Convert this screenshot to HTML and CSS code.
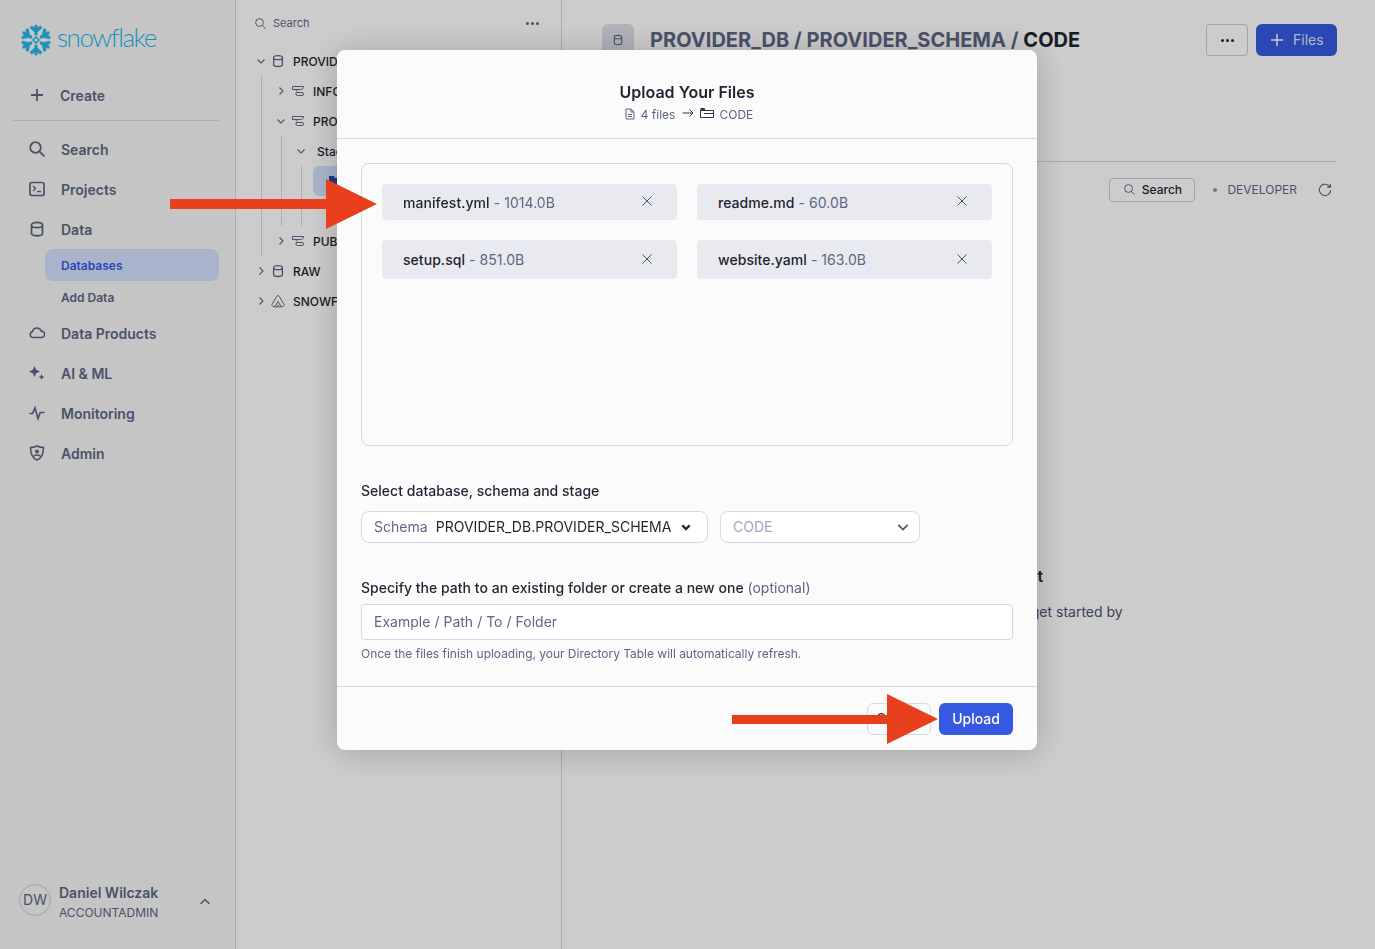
FILE: index.html
```html
<!DOCTYPE html>
<html lang="en">
<head>
    <meta charset="UTF-8">
    <meta name="viewport" content="width=device-width, initial-scale=1.0">
    <title>Upload Your Files</title>
    <link rel="stylesheet" href="styles.css">
</head>
<body>
    <svg class="defs" width="0" height="0">
        <symbol id="chev-right" viewBox="0 0 12 12"><path d="M4.500 2.500 8 6l-3.500 3.500" fill="none" stroke="currentColor" stroke-width="1.100"/></symbol>
        <symbol id="chev-down" viewBox="0 0 12 12"><path d="M2.500 4.500 6 8l3.500-3.500" fill="none" stroke="currentColor" stroke-width="1.100"/></symbol>
        <symbol id="chev-select" viewBox="0 0 12 12"><path d="M2 4.200 6 8.200l4-4" fill="none" stroke="currentColor" stroke-width="1.500"/></symbol>
        <symbol id="chev-small" viewBox="0 0 12 12"><path d="M2.800 4.500 6 7.700l3.200-3.200" fill="none" stroke="currentColor" stroke-width="2"/></symbol>
        <symbol id="db" viewBox="0 0 16 16"><path d="M3 4c0-3 10-3 10 0v8c0 3-10 3-10 0zM3 4.500c0 2.500 10 2.500 10 0" fill="none" stroke="currentColor" stroke-width="1.500"/></symbol>
        <symbol id="db-nav" viewBox="0 0 16 16"><path d="M2.500 4c0-3.500 11-3.500 11 0v8.500c0 3-11 3-11 0zM2.500 4.500c0 2.800 11 2.800 11 0" fill="none" stroke="currentColor" stroke-width="1.800"/></symbol>
        <symbol id="schema" viewBox="0 0 14 14"><path d="M1.500 2.500h11c0 2-1 3-3 3h-8zM5 5.500c0 1 .5 1.500 1.500 1.500M5 8.500h6a1.500 1.500 0 0 1 0 3H6.500A1.500 1.500 0 0 1 5 10z" fill="none" stroke="currentColor" stroke-width="1"/></symbol>
        <symbol id="search" viewBox="0 0 16 16"><circle cx="6.800" cy="6.800" r="4.800" fill="none" stroke="currentColor" stroke-width="1.200"/><path d="m10.400 10.400 4 4" stroke="currentColor" stroke-width="1.200"/></symbol>
        <symbol id="search-nav" viewBox="0 0 16 16"><circle cx="6.500" cy="6.500" r="5.300" fill="none" stroke="currentColor" stroke-width="1.800"/><path d="m10.400 10.400 5 5" stroke="currentColor" stroke-width="1.800"/></symbol>
        <symbol id="close" viewBox="0 0 12 12"><path d="m1.500 1.500 9 9m0-9-9 9" stroke="currentColor" stroke-width="1"/></symbol>
    </svg>

    <div class="app">
        <aside class="sidebar">
            <div class="logo">
                <svg class="logo-mark" viewBox="-16 -16 32 32">
                    <g fill="none" stroke="#29b5e8" stroke-width="3.200" stroke-linecap="round" stroke-linejoin="round">
                        <g id="arm"><path d="M0-6V-14M-4.200-12.500 0-8.300 4.200-12.500"/></g>
                        <use href="#arm" transform="rotate(60)"/>
                        <use href="#arm" transform="rotate(120)"/>
                        <use href="#arm" transform="rotate(180)"/>
                        <use href="#arm" transform="rotate(240)"/>
                        <use href="#arm" transform="rotate(300)"/>
                    </g>
                    <path d="M0-3 3 0 0 3-3 0z" fill="none" stroke="#29b5e8" stroke-width="1.600"/>
                </svg>
                <span class="logo-text">snowflake</span>
            </div>
            <div class="nav-item create">
                <svg class="nav-icon" viewBox="0 0 16 16"><path d="M8 2v12M2 8h12" stroke="currentColor" stroke-width="1.800"/></svg>
                <span>Create</span>
            </div>
            <hr class="nav-rule">
            <div class="nav-item"><svg class="nav-icon"><use href="#search-nav"/></svg><span>Search</span></div>
            <div class="nav-item">
                <svg class="nav-icon" viewBox="0 0 16 16"><rect x="1" y="1.500" width="14" height="13" rx="2" fill="none" stroke="currentColor" stroke-width="1.700"/><path d="m4 5 2.500 2.500L4 10M8 10.500h4" fill="none" stroke="currentColor" stroke-width="1.400"/></svg>
                <span>Projects</span>
            </div>
            <div class="nav-item"><svg class="nav-icon"><use href="#db-nav"/></svg><span>Data</span></div>
            <div class="subnav">
                <div class="sub-item active">Databases</div>
                <div class="sub-item">Add Data</div>
            </div>
            <div class="nav-item">
                <svg class="nav-icon" viewBox="0 0 16 16"><path d="M4 12.500a3 3 0 0 1-.500-5.900 4.600 4.600 0 0 1 8.800-.500 3.200 3.200 0 0 1 .200 6.400z" fill="none" stroke="currentColor" stroke-width="1.600"/></svg>
                <span>Data Products</span>
            </div>
            <div class="nav-item">
                <svg class="nav-icon" viewBox="0 0 16 16"><path d="M5.500 1 7.200 4.800 11 6.500 7.200 8.200 5.500 12 3.800 8.200 0 6.500 3.800 4.800zM12.500 9l.9 2.100 2.100.9-2.100.9-.9 2.100-.9-2.100-2.100-.9 2.100-.9z" fill="currentColor"/></svg>
                <span>AI &amp; ML</span>
            </div>
            <div class="nav-item">
                <svg class="nav-icon" viewBox="0 0 16 16"><path d="M.5 8.500h3L6 3l3 10.500 2.200-6H15.500" fill="none" stroke="currentColor" stroke-width="1.700"/></svg>
                <span>Monitoring</span>
            </div>
            <div class="nav-item">
                <svg class="nav-icon" viewBox="0 0 16 16"><path d="M8 1c2 1 4.500 1.500 6.500 1.500 0 6-1 10.500-6.500 12.500C2.500 13 1.500 8.500 1.500 2.500 3.500 2.500 6 2 8 1z" fill="none" stroke="currentColor" stroke-width="1.600"/><circle cx="8" cy="6.500" r="1.900" fill="currentColor"/><path d="M4.500 11.500c1-2 6-2 7 0" fill="none" stroke="currentColor" stroke-width="1.300"/></svg>
                <span>Admin</span>
            </div>
            <div class="user">
                <div class="avatar">DW</div>
                <div class="user-info">
                    <div class="user-name">Daniel Wilczak</div>
                    <div class="user-role">ACCOUNTADMIN</div>
                </div>
                <svg class="user-chev" viewBox="0 0 12 12"><path d="M1.500 8 6 3.500 10.500 8" fill="none" stroke="currentColor" stroke-width="1.500"/></svg>
            </div>
        </aside>

        <section class="tree-panel">
            <div class="tree-search">
                <svg class="tree-search-icon"><use href="#search"/></svg>
                <span>Search</span>
                <span class="dots tree-dots"><i></i><i></i><i></i></span>
            </div>
            <div class="tree">
                <div class="tree-row"><svg class="chev"><use href="#chev-down"/></svg><svg class="tree-icon"><use href="#db"/></svg><span>PROVIDER_DB</span></div>
                <div class="tree-children">
                    <div class="tree-row"><svg class="chev"><use href="#chev-right"/></svg><svg class="tree-icon"><use href="#schema"/></svg><span>INFORMATION_SCHEMA</span></div>
                    <div class="tree-row"><svg class="chev"><use href="#chev-down"/></svg><svg class="tree-icon"><use href="#schema"/></svg><span>PROVIDER_SCHEMA</span></div>
                    <div class="tree-children">
                        <div class="tree-row"><svg class="chev stages-chev"><use href="#chev-down"/></svg><span>Stages</span></div>
                        <div class="tree-children stage-list">
                            <div class="tree-row selected">
                                <svg class="stage-icon" viewBox="0 0 14 14"><path d="M1 2h5l1 2h6v8H1z" fill="#2a47b3"/></svg>
                                <span>CODE</span>
                            </div>
                            <div class="tree-row"></div>
                        </div>
                    </div>
                    <div class="tree-row"><svg class="chev"><use href="#chev-right"/></svg><svg class="tree-icon"><use href="#schema"/></svg><span>PUBLIC</span></div>
                </div>
                <div class="tree-row"><svg class="chev"><use href="#chev-right"/></svg><svg class="tree-icon"><use href="#db"/></svg><span>RAW</span></div>
                <div class="tree-row">
                    <svg class="chev"><use href="#chev-right"/></svg>
                    <svg class="tree-icon" viewBox="0 0 14 14"><path d="M5.600 2.500a1.600 1.600 0 0 1 2.800 0l4 7A1.700 1.700 0 0 1 11 12.500h-1L7 7.500l-3 5H3a1.700 1.700 0 0 1-1.400-3zM4 12.500a1.700 1.700 0 0 0 3-1.500M10 12.500A1.700 1.700 0 0 1 7 11" fill="none" stroke="currentColor" stroke-width="1"/></svg>
                    <span>SNOWFLAKE</span>
                </div>
            </div>
        </section>

        <main class="main">
            <header class="main-header">
                <div class="stage-badge"><svg class="badge-icon"><use href="#db"/></svg></div>
                <h1 class="main-title">PROVIDER_DB / PROVIDER_SCHEMA / <b>CODE</b></h1>
                <button class="btn-more"><span class="dots"><i></i><i></i><i></i></span></button>
                <button class="btn-files">
                    <svg class="plus" viewBox="0 0 14 14"><path d="M7 1v12M1 7h12" stroke="currentColor" stroke-width="1.500"/></svg>
                    Files
                </button>
            </header>
            <hr class="main-rule">
            <div class="toolbar">
                <button class="btn-search"><svg class="btn-search-icon"><use href="#search"/></svg>Search</button>
                <span class="role-dot"></span>
                <span class="role-name">DEVELOPER</span>
                <svg class="refresh" viewBox="0 0 14 14"><path d="M11.800 3.800A5.700 5.700 0 1 0 12.700 7M12.500 .8v3.300H9.200" fill="none" stroke="currentColor" stroke-width="1.100"/></svg>
            </div>
            <div class="empty">
                <h2 class="empty-title">Stage has no files yet</h2>
                <p class="empty-text">Upload files to this stage to get started by</p>
            </div>
        </main>
    </div>

    <div class="overlay">
        <div class="modal">
            <div class="modal-head">
                <div class="modal-title">Upload Your Files</div>
                <div class="modal-sub">
                    <svg class="sub-icon" viewBox="0 0 12 12"><path d="M2 1h5l3 3v7H2zM7 1v3h3M4 6.500h4M4 8.500h4" fill="none" stroke="currentColor" stroke-width="1"/></svg>
                    <span>4 files</span>
                    <svg class="sub-arrow" viewBox="0 0 12 10"><path d="M.5 5h10.500M7.500 1.500 11 5 7.500 8.500" fill="none" stroke="currentColor" stroke-width="1"/></svg>
                    <svg class="sub-folder" viewBox="0 0 14 12"><path d="M.5 3.500h13v7H.5zM4 6.500h9" fill="none" stroke="#2e3550" stroke-width="1"/><path d="M.5 1h4l1 2.500H.5z" fill="#2e3550"/></svg>
                    <span>CODE</span>
                </div>
            </div>

            <div class="modal-body">
                <div class="dropzone">
                    <div class="chip"><span><b>manifest.yml</b> - 1014.0B</span><svg class="chip-x"><use href="#close"/></svg></div>
                    <div class="chip"><span><b>readme.md</b> - 60.0B</span><svg class="chip-x"><use href="#close"/></svg></div>
                    <div class="chip"><span><b>setup.sql</b> - 851.0B</span><svg class="chip-x"><use href="#close"/></svg></div>
                    <div class="chip"><span><b>website.yaml</b> - 163.0B</span><svg class="chip-x"><use href="#close"/></svg></div>
                </div>

                <div class="field-label">Select database, schema and stage</div>
                <div class="select-row">
                    <div class="select schema-select">
                        <span class="select-key">Schema</span>
                        <span class="select-value">PROVIDER_DB.PROVIDER_SCHEMA</span>
                        <svg class="select-chev small"><use href="#chev-small"/></svg>
                    </div>
                    <div class="select stage-select">
                        <span class="select-muted">CODE</span>
                        <svg class="select-chev"><use href="#chev-select"/></svg>
                    </div>
                </div>

                <div class="field-label path-label">Specify the path to an existing folder or create a new one <span class="optional">(optional)</span></div>
                <div class="path-input">Example / Path / To / Folder</div>
                <div class="help">Once the files finish uploading, your Directory Table will automatically refresh.</div>
            </div>

            <div class="modal-foot">
                <button class="btn-cancel">Cancel</button>
                <button class="btn-upload">Upload</button>
            </div>
        </div>

        <!-- red callouts on top of the dialog -->
        <svg class="arrow arrow-chips" viewBox="0 0 207 50"><path d="M0 20h156V0l51 25-51 25V30H0z" fill="#e8401c"/></svg>
        <svg class="arrow arrow-upload" viewBox="0 0 206 50"><path d="M0 21h155V0l51 25-51 25V30H0z" fill="#e8401c"/></svg>
    </div>
</body>
</html>
```

FILE: styles.css
```css
* {
    box-sizing: border-box;
}
body {
    margin: 0;
    height: 949px;
    overflow: hidden;
    font-family: Inter, "Noto Sans", sans-serif;
    color: #1e252f;
    background-color: #fff;
}
button {
    font-family: inherit;
}
svg {
    display: block;
    flex: none;
}
.defs {
    position: absolute;
}
.app {
    display: flex;
    height: 949px;
}

/* left nav */
.sidebar {
    width: 236px;
    flex: none;
    display: flex;
    flex-direction: column;
    padding: 24px 16px 0 13px;
    background-color: #f7f7f8;
    border-right: 1px solid #d5d9e5;
    color: #5d6785;
}
.logo {
    display: flex;
    align-items: center;
    height: 32px;
    margin: 0 0 19px 7px;
}
.logo-mark {
    width: 32px;
    height: 32px;
}
.logo-text {
    margin: -7px 0 0 5px;
    font-family: Lato, sans-serif;
    font-weight: 300;
    font-size: 26px;
    letter-spacing: -1.450px;
    color: #29b5e8;
}
.nav-item {
    display: flex;
    align-items: center;
    gap: 16px;
    height: 40px;
    padding-left: 16px;
    font-size: 14px;
    font-weight: 600;
}
.nav-item.create {
    gap: 15px;
}
.nav-icon {
    width: 16px;
    height: 16px;
}
.nav-rule {
    height: 1px;
    margin: 5px 0 8px;
    border: 0;
    background-color: #d5d9e5;
}
.subnav {
    margin: 0 0 0 32px;
}
.sub-item {
    height: 32px;
    padding-left: 16px;
    line-height: 34px;
    font-size: 12px;
    font-weight: 600;
    border-radius: 8px;
}
.sub-item.active {
    background-color: #d4e1ff;
    color: #3559e0;
}
.user {
    display: flex;
    align-items: flex-start;
    margin-top: auto;
    margin-bottom: 28px;
    padding-left: 6px;
}
.avatar {
    width: 32px;
    height: 32px;
    border: 1px solid #c8ccda;
    border-radius: 50%;
    text-align: center;
    line-height: 30px;
    font-size: 14px;
}
.user-info {
    margin-left: 8px;
    width: 140px;
}
.user-name {
    font-size: 14px;
    font-weight: 600;
    line-height: 18px;
}
.user-role {
    margin-top: 3px;
    font-size: 12px;
    line-height: 16px;
}
.user-chev {
    width: 12px;
    height: 12px;
    margin-top: 12px;
}

/* database tree */
.tree-panel {
    width: 326px;
    flex: none;
    padding-left: 19px;
    background-color: #fff;
    border-right: 1px solid #d5d9e5;
    font-size: 12px;
    font-weight: 500;
    color: #1e252f;
}
.tree-search {
    display: flex;
    align-items: center;
    height: 46px;
    font-size: 11px;
    font-weight: 400;
    color: #5d6785;
}
.tree-search-icon {
    width: 13px;
    height: 13px;
    margin: 0 6px 0 -1px;
}
.tree-dots {
    margin-left: auto;
    margin-right: 22px;
}
.dots {
    display: inline-flex;
    gap: 2px;
}
.dots i {
    width: 3px;
    height: 3px;
    border-radius: 50%;
    background-color: currentColor;
}
.tree-row {
    display: flex;
    align-items: center;
    height: 30px;
    white-space: nowrap;
}
.chev {
    width: 12px;
    height: 12px;
    color: #5d6785;
    margin-right: 4px;
}
.stages-chev {
    margin-right: 10px;
}
.tree-icon {
    width: 14px;
    height: 14px;
    color: #5d6785;
    margin-right: 8px;
}
.tree-children {
    margin-left: 6px;
    padding-left: 13px;
    border-left: 1px solid #d5d9e5;
}
.stage-list {
    padding-left: 11px;
}
.tree-row.selected {
    padding-left: 15px;
    border-radius: 6px;
    background-color: #d4e1ff;
    color: #3559e0;
}
.stage-icon {
    width: 14px;
    height: 14px;
    margin-right: 8px;
}

/* stage page behind the dialog */
.main {
    flex: 1;
    padding: 24px 38px 0 40px;
    background-color: #fff;
}
.main-header {
    display: flex;
    align-items: center;
    height: 32px;
}
.stage-badge {
    display: flex;
    justify-content: center;
    align-items: center;
    width: 32px;
    height: 32px;
    margin-right: 16px;
    border-radius: 6px;
    background-color: #dde0e8;
}
.badge-icon {
    width: 12px;
    height: 12px;
    color: #5d6785;
}
.main-title {
    margin: 0 auto 0 0;
    font-size: 20px;
    font-weight: 700;
    letter-spacing: .03px;
    color: #5d6785;
}
.main-title b {
    font-weight: 700;
    color: #1e252f;
}
.btn-more {
    display: flex;
    justify-content: center;
    align-items: center;
    width: 42px;
    height: 32px;
    margin-right: 8px;
    padding: 0;
    color: #1e252f;
    background-color: transparent;
    border: 1px solid #c8ccda;
    border-radius: 4px;
}
.btn-files {
    display: flex;
    align-items: center;
    gap: 9px;
    width: 81px;
    height: 32px;
    padding: 0 0 2px 14px;
    font-size: 14px;
    font-weight: 400;
    color: #dce3fb;
    background-color: #3559e0;
    border: none;
    border-radius: 6px;
}
.plus {
    width: 14px;
    height: 14px;
    margin-top: 2px;
    color: #fff;
}
.main-rule {
    height: 1px;
    margin: 105px 0 16px;
    border: 0;
    background-color: #d5d9e5;
}
.toolbar {
    display: flex;
    align-items: center;
    justify-content: flex-end;
    height: 24px;
    padding-right: 5px;
    font-size: 12px;
}
.btn-search {
    display: flex;
    align-items: center;
    justify-content: center;
    gap: 6px;
    width: 86px;
    height: 24px;
    padding: 0 0 2px;
    font-size: 12px;
    font-weight: 500;
    color: #1e252f;
    background-color: transparent;
    border: 1px solid #c8ccda;
    border-radius: 4px;
}
.btn-search-icon {
    width: 13px;
    height: 13px;
    color: #5d6785;
}
.role-dot {
    width: 4px;
    height: 4px;
    margin: 0 10px 0 18px;
    border-radius: 50%;
    background-color: #8a94ad;
}
.role-name {
    margin: -2px 21px 0 0;
    color: #5d6785;
}
.refresh {
    width: 14px;
    height: 14px;
    color: #5d6785;
}
.empty {
    margin-top: 364px;
    text-align: center;
}
.empty-title {
    margin: 0;
    padding-right: 18px;
    font-size: 16px;
    font-weight: 600;
    line-height: 20px;
}
.empty-text {
    margin: 16px 0 0;
    padding-left: 30px;
    font-size: 14px;
    line-height: 20px;
    color: #4a5470;
}

/* dialog */
.overlay {
    position: fixed;
    inset: 0;
    display: flex;
    justify-content: center;
    padding: 50px 1px 0 0;
    background-color: rgba(0, 0, 0, .2);
}
.modal {
    display: flex;
    flex-direction: column;
    width: 700px;
    height: 700px;
    background-color: #fbfbfc;
    border-radius: 8px;
    box-shadow: 0 2px 32px rgba(0, 0, 0, .22);
}
.modal-head {
    height: 89px;
    padding-top: 32px;
    text-align: center;
    border-bottom: 1px solid #d5d9e5;
}
.modal-title {
    font-size: 16px;
    font-weight: 600;
    line-height: 20px;
}
.modal-sub {
    display: flex;
    justify-content: center;
    align-items: center;
    height: 16px;
    margin-top: 4px;
    padding-left: 3px;
    font-size: 12px;
    color: #5d6785;
}
.sub-icon {
    width: 12px;
    height: 12px;
    margin-right: 5px;
}
.sub-arrow {
    width: 12px;
    height: 10px;
    margin: -2px 6px 0 7px;
    color: #2e3550;
}
.sub-folder {
    width: 14px;
    height: 12px;
    margin: -2px 5px 0 0;
}
.modal-body {
    flex: 1;
    padding: 24px 24px 0;
    letter-spacing: .02px;
}
.dropzone {
    display: grid;
    grid-template-columns: 295px 295px;
    grid-template-rows: 36px 39px;
    gap: 20px;
    height: 283px;
    padding: 20px;
    border: 1px solid #d5d9e5;
    border-radius: 8px;
}
.chip {
    display: flex;
    align-items: center;
    justify-content: space-between;
    padding: 0 24px 0 21px;
    font-size: 14px;
    letter-spacing: .05px;
    color: #5d6785;
    background-color: #e9eaef;
    border-radius: 4px;
}
.chip b {
    font-weight: 500;
    color: #1e252f;
}
.chip-x {
    width: 12px;
    height: 12px;
    margin-top: -2px;
    color: #4a5470;
}
.field-label {
    margin: 36px 0 11px;
    font-size: 14px;
    font-weight: 500;
    line-height: 18px;
}
.path-label {
    margin-bottom: 7px;
}
.optional {
    font-weight: 400;
    color: #5d6785;
}
.select-row {
    display: flex;
    gap: 12px;
}
.select {
    display: flex;
    align-items: center;
    height: 32px;
    padding: 0 9px 2px 12px;
    font-size: 14px;
    background-color: #fff;
    border: 1px solid #d5d9e5;
    border-radius: 8px;
}
.schema-select {
    width: 347px;
}
.stage-select {
    width: 200px;
    justify-content: space-between;
}
.select-key {
    margin-right: 8px;
    color: #5d6785;
}
.select-value {
    margin-right: 8px;
}
.select-muted {
    color: #a0a8c0;
}
.select-chev {
    width: 14px;
    height: 14px;
    margin-top: 2px;
    color: #4a5470;
}
.select-chev.small {
    color: #1e252f;
}
.path-input {
    height: 36px;
    padding: 0 12px;
    line-height: 34px;
    font-size: 14px;
    color: #5d6785;
    background-color: #fff;
    border: 1px solid #d5d9e5;
    border-radius: 4px;
}
.help {
    margin-top: 6px;
    line-height: 16px;
    font-size: 12px;
    letter-spacing: -.02px;
    color: #5d6785;
}
.modal-foot {
    display: flex;
    justify-content: flex-end;
    gap: 8px;
    height: 64px;
    padding: 16px 24px 0;
    border-top: 1px solid #d5d9e5;
}
.btn-cancel, .btn-upload {
    height: 32px;
    padding: 0 0 2px;
    font-size: 14px;
    border-radius: 6px;
}
.btn-cancel {
    width: 64px;
    color: #1e252f;
    background-color: transparent;
    border: 1px solid #d5d9e5;
}
.btn-upload {
    width: 74px;
    font-weight: 500;
    color: #fff;
    background-color: #3559e0;
    border: none;
}
.arrow {
    position: absolute;
}
.arrow-chips {
    left: 170px;
    top: 179px;
    width: 207px;
    height: 50px;
}
.arrow-upload {
    left: 732px;
    top: 694px;
    width: 206px;
    height: 50px;
}
```
